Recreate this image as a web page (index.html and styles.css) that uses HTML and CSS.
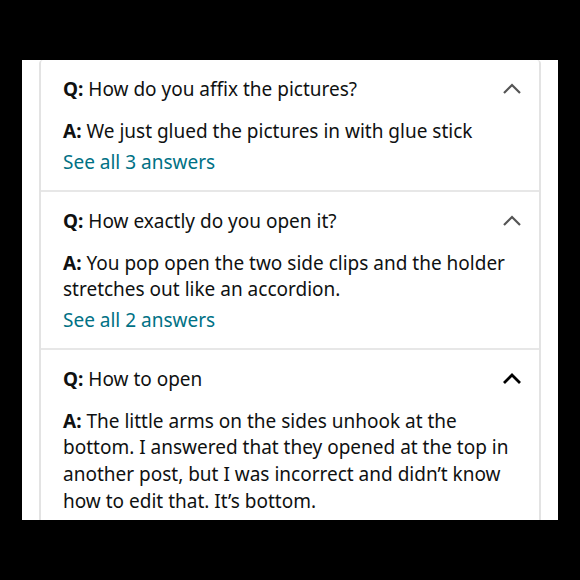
FILE: index.html
```html
<!DOCTYPE html>
<html>
<head>
<meta charset="utf-8">
<link rel="stylesheet" href="styles.css">
</head>
<body>
<div class="panel">
  <div class="card">
    <div class="item">
      <div class="q-row">
        <div class="q"><b>Q:</b> How do you affix the pictures?</div>
        <svg class="chev" width="20" height="12" viewBox="0 0 20 12"><polyline points="2,11 10,3 18,11"/></svg>
      </div>
      <div class="a"><b>A:</b> We just glued the pictures in with glue stick</div>
      <div class="more">See all 3 answers</div>
    </div>
    <div class="item">
      <div class="q-row">
        <div class="q"><b>Q:</b> How exactly do you open it?</div>
        <svg class="chev" width="20" height="12" viewBox="0 0 20 12"><polyline points="2,11 10,3 18,11"/></svg>
      </div>
      <div class="a"><b>A:</b> You pop open the two side clips and the holder stretches out like an accordion.</div>
      <div class="more">See all 2 answers</div>
    </div>
    <div class="item last">
      <div class="q-row">
        <div class="q"><b>Q:</b> How to open</div>
        <svg class="chev dark" width="20" height="12" viewBox="0 0 20 12"><polyline points="2,11 10,3 18,11"/></svg>
      </div>
      <div class="a"><b>A:</b> The little arms on the sides unhook at the bottom. I answered that they opened at the top in another post, but I was incorrect and didn’t know how to edit that. It’s bottom.</div>
    </div>
  </div>
</div>
</body>
</html>
```
FILE: styles.css
```css
html, body {
  margin: 0;
  padding: 0;
  background: #000;
}
body {
  width: 580px;
  height: 580px;
  font-family: "Noto Sans", "Open Sans", sans-serif;
  color: #0f1111;
}
.panel {
  margin: 60px 22px 0 22px;
  height: 460px;
  background: #fff;
  overflow: hidden;
  padding: 0 17px;
}
.card {
  border-left: 2px solid #e3e3e3;
  border-right: 2px solid #e3e3e3;
  border-top-left-radius: 4px;
  border-top-right-radius: 4px;
  height: 100%;
}
.item {
  padding: 16px 17px 14px 22px;
  border-bottom: 2px solid #e7e7e7;
}
.item.last {
  border-bottom: none;
}
.q-row {
  display: flex;
  justify-content: space-between;
  align-items: flex-start;
}
.q {
  font-size: 19px;
  line-height: 27px;
}
.q b, .a b {
  font-weight: 700;
}
.chev {
  margin-top: 6px;
  flex: none;
}
.chev polyline {
  fill: none;
  stroke: #555;
  stroke-width: 2.2;
}
.chev.dark polyline {
  stroke: #000;
  stroke-width: 2.8;
}
.a {
  margin-top: 15px;
  font-size: 19px;
  line-height: 26.6px;
}
.more {
  margin-top: 4px;
  font-size: 19px;
  line-height: 27px;
  color: #007185;
}
```
